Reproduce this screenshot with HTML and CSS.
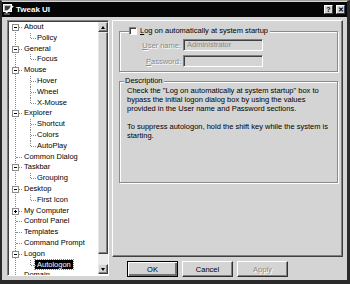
FILE: index.html
```html
<!DOCTYPE html>
<html lang="en">
<head>
    <meta charset="UTF-8">
    <title>Tweak UI</title>
    <link rel="stylesheet" href="styles.css">
</head>
<body>
    <div class="window">
        <div class="titlebar">
            <svg class="app-icon" viewBox="0 0 11 11" xmlns="http://www.w3.org/2000/svg">
                <rect x="0.5" y="0.5" width="8" height="7" fill="#bfbfbf" stroke="#fff"></rect>
                <rect x="2" y="2" width="5" height="4" fill="#404040"></rect>
                <path d="M3 9 L10 2" stroke="#fff" stroke-width="1.6"></path>
                <path d="M1 10 H7" stroke="#9a9a9a" stroke-width="1"></path>
            </svg>
            <span class="title">Tweak UI</span>
            <div class="title-btns">
                <span class="tbtn">?</span>
                <span class="tbtn">&#x2715;</span>
            </div>
        </div>

        <div class="main">
            <div class="tree">
                <div class="tree-list">
                    <div class="node root"><span class="exp minus"></span>About</div>
                    <div class="node child last">Policy</div>
                    <div class="node root"><span class="exp minus"></span>General</div>
                    <div class="node child last">Focus</div>
                    <div class="node root"><span class="exp minus"></span>Mouse</div>
                    <div class="node child">Hover</div>
                    <div class="node child">Wheel</div>
                    <div class="node child last">X-Mouse</div>
                    <div class="node root"><span class="exp minus"></span>Explorer</div>
                    <div class="node child">Shortcut</div>
                    <div class="node child">Colors</div>
                    <div class="node child last">AutoPlay</div>
                    <div class="node root">Common Dialog</div>
                    <div class="node root"><span class="exp minus"></span>Taskbar</div>
                    <div class="node child last">Grouping</div>
                    <div class="node root"><span class="exp minus"></span>Desktop</div>
                    <div class="node child last">First Icon</div>
                    <div class="node root"><span class="exp plus"></span>My Computer</div>
                    <div class="node root">Control Panel</div>
                    <div class="node root">Templates</div>
                    <div class="node root">Command Prompt</div>
                    <div class="node root"><span class="exp minus"></span>Logon</div>
                    <div class="node child last"><span class="selected">Autologon</span></div>
                    <div class="node root">Domain</div>
                </div>
                <div class="scrollbar">
                    <div class="sb-btn"><span class="arrow up"></span></div>
                    <div class="sb-thumb"></div>
                    <div class="sb-track"></div>
                    <div class="sb-btn"><span class="arrow down"></span></div>
                </div>
            </div>

            <div class="right">
                <div class="page">
                    <fieldset class="group logon-group">
                        <legend><span class="checkbox"></span><span><u>L</u>og on automatically at system startup</span></legend>
                        <div class="fields">
                            <label class="disabled"><u>U</u>ser name:</label>
                            <div class="textbox">Administrator</div>
                            <label class="disabled"><u>P</u>assword:</label>
                            <div class="textbox"></div>
                        </div>
                    </fieldset>

                    <fieldset class="group desc-group">
                        <legend>Description</legend>
                        <p>Check the "Log on automatically at system startup" box to<br>
                        bypass the initial logon dialog box by using the values<br>
                        provided in the User name and Password sections.</p>
                        <p>To suppress autologon, hold the shift key while the system is<br>
                        starting.</p>
                    </fieldset>
                </div>
                <div class="buttons">
                    <button class="btn default">OK</button>
                    <button class="btn">Cancel</button>
                    <button class="btn" disabled>Apply</button>
                </div>
            </div>
        </div>
    </div>
</body>
</html>
```

FILE: styles.css
```css
body {
    margin: 0;
    background-color: #1c1c1c;
    font-family: 'Liberation Sans', Arial, sans-serif;
    font-size: 7.5px;
    color: #000;
}
.window {
    width: 350px;
    height: 284px;
    box-sizing: border-box;
    background-color: #d4d4d4;
    border-top: 1px solid #a0a0a0;
    border-left: 2px solid #2a2a2a;
    border-right: 3px solid #2a2a2a;
    border-bottom: 4px solid #2a2a2a;
    display: flex;
    flex-direction: column;
}
.titlebar {
    height: 15px;
    margin-top: 1px;
    background-color: #050505;
    display: flex;
    align-items: center;
    padding-left: 1px;
}
.app-icon {
    width: 11px;
    height: 11px;
}
.title {
    color: #fff;
    font-weight: bold;
    font-size: 8px;
    margin-left: 2px;
}
.title-btns {
    margin-left: auto;
    display: flex;
    gap: 3px;
    margin-right: 2px;
}
.tbtn {
    width: 9px;
    height: 9px;
    box-sizing: border-box;
    background-color: #d4d4d4;
    border-top: 1px solid #fff;
    border-left: 1px solid #fff;
    border-right: 1px solid #404040;
    border-bottom: 1px solid #404040;
    font-size: 7px;
    font-weight: bold;
    line-height: 7px;
    text-align: center;
}

.main {
    display: flex;
    gap: 3px;
    padding: 3px 0 0 5px;
}

/* tree view */
.tree {
    width: 102px;
    height: 256px;
    box-sizing: border-box;
    background-color: #fff;
    border-top: 1px solid #808080;
    border-left: 1px solid #808080;
    border-right: 1px solid #fff;
    border-bottom: 1px solid #fff;
    box-shadow: inset 1px 1px 0 #404040;
    padding: 1px 0 0 1px;
    display: flex;
}
.tree-list {
    flex: 1;
    overflow: hidden;
    position: relative;
}
.tree-list::before {
    content: "";
    position: absolute;
    left: 6px;
    top: 5px;
    bottom: 0;
    border-left: 1px dotted #8a8a8a;
}
.node {
    height: 10.8px;
    line-height: 10.8px;
    white-space: nowrap;
    position: relative;
}
.node.root {
    padding-left: 15px;
}
.node.child {
    padding-left: 28px;
}
.node.root::before {
    content: "";
    position: absolute;
    left: 7px;
    width: 6px;
    top: 5px;
    border-top: 1px dotted #8a8a8a;
}
.node.child::before {
    content: "";
    position: absolute;
    left: 21px;
    top: 0;
    height: 100%;
    border-left: 1px dotted #8a8a8a;
}
.node.child.last::before {
    height: 5px;
}
.node.child::after {
    content: "";
    position: absolute;
    left: 22px;
    width: 5px;
    top: 5px;
    border-top: 1px dotted #8a8a8a;
}
.exp {
    position: absolute;
    left: 3px;
    top: 2px;
    width: 7px;
    height: 7px;
    box-sizing: border-box;
    border: 1px solid #8a8a8a;
    background-color: #fff;
    z-index: 1;
}
.exp::before {
    content: "";
    position: absolute;
    left: 1px;
    top: 2px;
    width: 3px;
    height: 1px;
    background-color: #000;
}
.exp.plus::after {
    content: "";
    position: absolute;
    left: 2px;
    top: 1px;
    width: 1px;
    height: 3px;
    background-color: #000;
}
.selected {
    background-color: #000;
    color: #fff;
    margin-left: -2px;
    padding: 0 2px;
    outline: 1px dotted #808080;
}

/* scrollbar */
.scrollbar {
    width: 10px;
    display: flex;
    flex-direction: column;
    margin-bottom: 1px;
}
.sb-btn, .sb-thumb {
    box-sizing: border-box;
    background-color: #d4d4d4;
    border-top: 1px solid #e8e8e8;
    border-left: 1px solid #e8e8e8;
    border-right: 1px solid #404040;
    border-bottom: 1px solid #404040;
    box-shadow: inset -1px -1px 0 #808080;
}
.sb-btn {
    height: 10px;
    display: flex;
    align-items: center;
    justify-content: center;
}
.sb-thumb {
    height: 222px;
}
.sb-track {
    flex: 1;
    background-color: #ececec;
}
.arrow {
    width: 0;
    height: 0;
    border-left: 2.5px solid transparent;
    border-right: 2.5px solid transparent;
}
.arrow.up {
    border-bottom: 3px solid #000;
}
.arrow.down {
    border-top: 3px solid #000;
}

/* right side */
.right {
    width: 231px;
    display: flex;
    flex-direction: column;
}
.page {
    height: 237px;
    box-sizing: border-box;
    border-top: 1px solid #fff;
    border-left: 1px solid #fff;
    border-right: 1px solid #404040;
    border-bottom: 1px solid #404040;
    box-shadow: inset -1px -1px 0 #808080;
    padding: 5px 0 0 6px;
}
.group {
    width: 219px;
    box-sizing: border-box;
    margin: 0;
    border: 1px solid #8a8a8a;
    box-shadow: 1px 1px 0 #fff, inset 1px 1px 0 #fff;
    min-inline-size: 0;
}
.group legend {
    background-color: #d4d4d4;
    line-height: 10px;
    white-space: nowrap;
}
.logon-group {
    padding: 3px 0 4px 9px;
}
.logon-group legend {
    display: flex;
    align-items: center;
    gap: 3px;
    padding: 0 2px 0 0;
}
.checkbox {
    width: 8px;
    height: 8px;
    box-sizing: border-box;
    background-color: #fff;
    border-top: 1px solid #808080;
    border-left: 1px solid #808080;
    border-right: 1px solid #fff;
    border-bottom: 1px solid #fff;
    box-shadow: inset 1px 1px 0 #404040;
}
.fields {
    display: grid;
    grid-template-columns: 52px 80px;
    grid-auto-rows: 12px;
    column-gap: 2px;
    row-gap: 4px;
    align-items: center;
}
.fields label {
    text-align: right;
}
.disabled {
    color: #8a8a8a;
    text-shadow: 1px 1px 0 #fff;
}
.textbox {
    height: 12px;
    box-sizing: border-box;
    border-top: 1px solid #808080;
    border-left: 1px solid #808080;
    border-right: 1px solid #fff;
    border-bottom: 1px solid #fff;
    box-shadow: inset 1px 1px 0 #404040;
    color: #8a8a8a;
    line-height: 10px;
    padding-left: 3px;
}
.desc-group {
    margin-top: 4px;
    height: 107px;
    padding: 0 4px 0 7px;
}
.desc-group legend {
    margin-left: -3px;
    padding: 0 1px;
}
.desc-group p {
    margin: 0 0 9px 0;
    line-height: 9px;
    white-space: nowrap;
}

/* buttons */
.buttons {
    display: flex;
    gap: 4px;
    margin-top: 4px;
    padding-left: 15px;
}
.btn {
    width: 51px;
    height: 16px;
    box-sizing: border-box;
    padding: 0;
    font-family: 'Liberation Sans', Arial, sans-serif;
    font-size: 7.5px;
    color: #000;
    background-color: #d4d4d4;
    border-top: 1px solid #fff;
    border-left: 1px solid #fff;
    border-right: 1px solid #303030;
    border-bottom: 1px solid #303030;
    box-shadow: inset -1px -1px 0 #808080;
}
.btn.default {
    border: 1px solid #000;
    box-shadow: inset 1px 1px 0 #fff, inset -2px -2px 0 #707070;
}
.btn:disabled {
    color: #8a8a8a;
    text-shadow: 1px 1px 0 #fff;
}
```
